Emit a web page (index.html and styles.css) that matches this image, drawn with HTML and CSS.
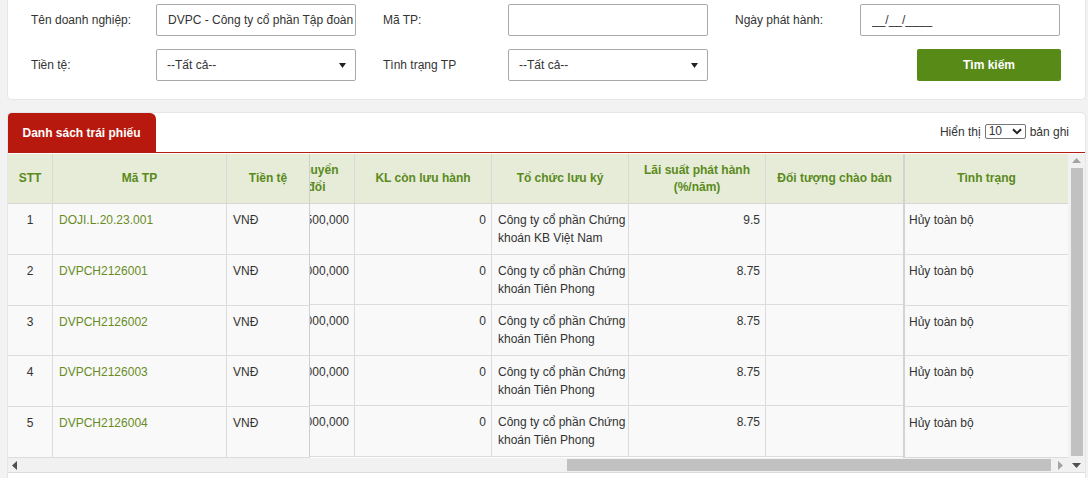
FILE: index.html
```html
<!DOCTYPE html>
<html lang="vi">
<head>
<meta charset="utf-8">
<title>Danh sách trái phiếu</title>
<link rel="stylesheet" href="styles.css">
</head>
<body>
<section class="filter-card">
  <div class="field">
    <label class="field-label">Tên doanh nghiệp:</label>
    <input class="text-input" type="text" value="DVPC - Công ty cổ phần Tập đoàn Điện lực">
  </div>
  <div class="field">
    <label class="field-label">Mã TP:</label>
    <input class="text-input" type="text" value="">
  </div>
  <div class="field">
    <label class="field-label">Ngày phát hành:</label>
    <input class="text-input" type="text" value="__/__/____">
  </div>
  <div class="field">
    <label class="field-label">Tiền tệ:</label>
    <div class="select-box">
      <span>--Tất cả--</span>
      <svg class="select-arrow" width="7" height="5" viewBox="0 0 7 5"><path d="M0 0h7L3.5 5z" fill="#222"/></svg>
    </div>
  </div>
  <div class="field">
    <label class="field-label">Tình trạng TP</label>
    <div class="select-box">
      <span>--Tất cả--</span>
      <svg class="select-arrow" width="7" height="5" viewBox="0 0 7 5"><path d="M0 0h7L3.5 5z" fill="#222"/></svg>
    </div>
  </div>
  <div class="field field-end">
    <button class="btn-search" type="button">Tìm kiếm</button>
  </div>
</section>

<section class="list-card">
  <div class="list-bar">
    <div class="tab">Danh sách trái phiếu</div>
    <div class="page-size">
      <span>Hiển thị</span>
      <span class="mini-select">10<svg width="10" height="7" viewBox="0 0 10 7"><path d="M1 1.2l4 4 4-4" fill="none" stroke="#222" stroke-width="2"/></svg></span>
      <span>bản ghi</span>
    </div>
  </div>

  <div class="table-area">
    <div class="table-main">
      <table class="grid grid-left">
        <colgroup><col class="w-stt"><col class="w-ma"><col class="w-tien"></colgroup>
        <thead><tr><th>STT</th><th>Mã TP</th><th>Tiền tệ</th></tr></thead>
        <tbody>
          <tr><td class="c">1</td><td><a class="link">DOJI.L.20.23.001</a></td><td>VNĐ</td></tr>
          <tr><td class="c">2</td><td><a class="link">DVPCH2126001</a></td><td>VNĐ</td></tr>
          <tr><td class="c">3</td><td><a class="link">DVPCH2126002</a></td><td>VNĐ</td></tr>
          <tr><td class="c">4</td><td><a class="link">DVPCH2126003</a></td><td>VNĐ</td></tr>
          <tr><td class="c">5</td><td><a class="link">DVPCH2126004</a></td><td>VNĐ</td></tr>
        </tbody>
      </table>

      <div class="scroll-view">
        <table class="grid grid-mid">
          <colgroup><col class="w-cd"><col class="w-137"><col class="w-137"><col class="w-137"><col class="w-137"></colgroup>
          <thead><tr><th>Chuyển đổi</th><th>KL còn lưu hành</th><th>Tổ chức lưu ký</th><th>Lãi suất phát hành<br>(%/năm)</th><th>Đối tượng chào bán</th></tr></thead>
          <tbody>
            <tr><td class="r">1,500,000</td><td class="r">0</td><td class="org">Công ty cổ phần Chứng<br>khoán KB Việt Nam</td><td class="r">9.5</td><td></td></tr>
            <tr><td class="r">1,000,000</td><td class="r">0</td><td class="org">Công ty cổ phần Chứng<br>khoán Tiên Phong</td><td class="r">8.75</td><td></td></tr>
            <tr><td class="r">1,000,000</td><td class="r">0</td><td class="org">Công ty cổ phần Chứng<br>khoán Tiên Phong</td><td class="r">8.75</td><td></td></tr>
            <tr><td class="r">1,000,000</td><td class="r">0</td><td class="org">Công ty cổ phần Chứng<br>khoán Tiên Phong</td><td class="r">8.75</td><td></td></tr>
            <tr><td class="r">1,000,000</td><td class="r">0</td><td class="org">Công ty cổ phần Chứng<br>khoán Tiên Phong</td><td class="r">8.75</td><td></td></tr>
          </tbody>
        </table>
      </div>

      <table class="grid grid-right">
        <thead><tr><th>Tình trạng</th></tr></thead>
        <tbody>
          <tr><td>Hủy toàn bộ</td></tr>
          <tr><td>Hủy toàn bộ</td></tr>
          <tr><td>Hủy toàn bộ</td></tr>
          <tr><td>Hủy toàn bộ</td></tr>
          <tr><td>Hủy toàn bộ</td></tr>
        </tbody>
      </table>
    </div>

    <div class="vscroll">
      <svg class="arrow" width="9" height="5" viewBox="0 0 9 5"><path d="M0 5h9L4.5 0z" fill="#a3a3a3"/></svg>
      <div class="vthumb"></div>
      <svg class="arrow" width="9" height="5" viewBox="0 0 9 5"><path d="M0 0h9L4.5 5z" fill="#505050"/></svg>
    </div>

    <div class="hscroll">
      <svg class="arrow" width="5" height="9" viewBox="0 0 5 9"><path d="M5 0v9L0 4.5z" fill="#505050"/></svg>
      <div class="htrack"><div class="hthumb"></div></div>
      <svg class="arrow" width="5" height="9" viewBox="0 0 5 9"><path d="M0 0v9L5 4.5z" fill="#a3a3a3"/></svg>
    </div>
  </div>
</section>
</body>
</html>
```

FILE: styles.css
```css
* { box-sizing: border-box; }

html, body {
  margin: 0;
  padding: 0;
  background: #f2f2f2;
  font-family: "Liberation Sans", Arial, sans-serif;
  font-size: 12px;
  color: #333;
  overflow: hidden;
}

/* ---------- filter card ---------- */
.filter-card {
  margin: 0 2px 0 7px;
  width: 1079px;
  background: #fff;
  border: 1px solid #e6e6e6;
  border-top: 0;
  border-radius: 0 0 5px 5px;
  padding: 4px 0 18px 23px;
  display: grid;
  grid-template-columns: repeat(3, 326px);
  column-gap: 26px;
  row-gap: 13px;
}

.field {
  display: flex;
  align-items: center;
  height: 32px;
}

.field-end { justify-content: flex-end; }

.field-label {
  width: 125px;
  flex: none;
  color: #333;
}

.text-input {
  width: 200px;
  height: 32px;
  border: 1px solid #a9a9a9;
  border-radius: 2px;
  padding: 0 2px 0 11px;
  font: 12px "Liberation Sans", Arial, sans-serif;
  color: #333;
  outline: none;
}

.select-box {
  position: relative;
  width: 200px;
  height: 32px;
  border: 1px solid #a9a9a9;
  border-radius: 2px;
  padding: 0 10px;
  display: flex;
  align-items: center;
  color: #333;
}

.select-arrow {
  position: absolute;
  right: 9px;
  top: 13px;
}

.btn-search {
  width: 144px;
  height: 32px;
  border: 0;
  border-radius: 2px;
  background: #578a17;
  color: #fff;
  font: bold 12px "Liberation Sans", Arial, sans-serif;
  padding: 0;
}

/* ---------- list card ---------- */
.list-card {
  margin: 12px 2px 0 7px;
  width: 1079px;
  background: #fff;
  border: 1px solid #e6e6e6;
  border-bottom: 0;
  border-radius: 5px 5px 0 0;
  height: 366px;
  overflow: hidden;
}

.list-bar {
  display: flex;
  justify-content: space-between;
  align-items: center;
  height: 40px;
  border-bottom: 1px solid #b71c12;
}

.tab {
  align-self: stretch;
  margin: 0 0 0 -1px;
  width: 149px;
  background: #b8190e;
  color: #fff;
  font-weight: bold;
  display: flex;
  align-items: center;
  justify-content: center;
  border-radius: 2px 6px 0 0;
}

.page-size {
  display: flex;
  align-items: center;
  gap: 4px;
  padding-right: 16px;
  margin-top: -2px;
}

.mini-select {
  display: inline-flex;
  align-items: center;
  justify-content: space-between;
  width: 41px;
  height: 15px;
  border: 1px solid #767676;
  border-radius: 2px;
  padding: 0 3px 0 3px;
  line-height: 13px;
}

/* ---------- table area ---------- */
.table-area {
  display: grid;
  grid-template-columns: 1060px 17px;
  grid-template-rows: 304px 15px;
  margin-top: 1px;
}

.table-main {
  display: flex;
  overflow: hidden;
  height: 304px;
}

.grid {
  border-collapse: separate;
  border-spacing: 0;
  table-layout: fixed;
  flex: none;
}

.grid th {
  height: 50px;
  background: #e6ecd8;
  color: #5a8a1b;
  font-weight: bold;
  text-align: center;
  vertical-align: middle;
  line-height: 17px;
  padding: 0 8px;
  border-right: 1px solid #d9d9d9;
  border-bottom: 1px solid #d6d6d6;
}

.grid td {
  height: 50.6px;
  background: #f9f9f9;
  vertical-align: top;
  line-height: 18px;
  padding: 7px 6px 0;
  border-right: 1px solid #dcdcdc;
  border-bottom: 1px solid #dcdcdc;
  color: #333;
}

.grid td.c { text-align: center; }
.grid td.r { text-align: right; padding-right: 5px; }
.grid td.org { white-space: nowrap; padding-left: 6px; }

.link { color: #688c1e; text-decoration: none; }

.grid-left { width: 302px; }
.w-stt { width: 45px; }
.w-ma { width: 174px; }
.w-tien { width: 83px; }
.grid-left tr > :last-child { border-right-color: #cfcfcf; }

.scroll-view {
  flex: none;
  width: 593px;
  overflow: hidden;
}

.grid-mid {
  width: 624px;
  margin-left: -31px;
}
.w-cd { width: 76px; }
.w-137 { width: 137px; }
.grid-mid tr > :last-child { border-right: 0; }

.grid-right {
  width: 165px;
}
.grid-right th, .grid-right td {
  border-left: 2px solid #d3d3d3;
  border-right: 0;
}
.grid-right td { padding-left: 4px; }

/* ---------- scrollbars ---------- */
.vscroll {
  grid-column: 2;
  grid-row: 1 / span 2;
  background: #f1f1f1;
  display: flex;
  flex-direction: column;
  align-items: center;
  padding: 4px 0 4px;
  border-bottom: 1px solid #dcdcdc;
}

.vthumb {
  width: 12px;
  flex: 1;
  margin: 5px 0 7px;
  background: #c1c1c1;
}

.hscroll {
  grid-column: 1;
  grid-row: 2;
  background: #f1f1f1;
  display: flex;
  align-items: center;
  padding: 0 5px 0 4px;
  border-bottom: 1px solid #dcdcdc;
}

.htrack {
  flex: 1;
  height: 100%;
  padding: 1px 0 1px 545px;
  margin: 0 6px 0 5px;
}

.hthumb {
  height: 100%;
  width: 484px;
  background: #c1c1c1;
}

.arrow { flex: none; display: block; }
```
